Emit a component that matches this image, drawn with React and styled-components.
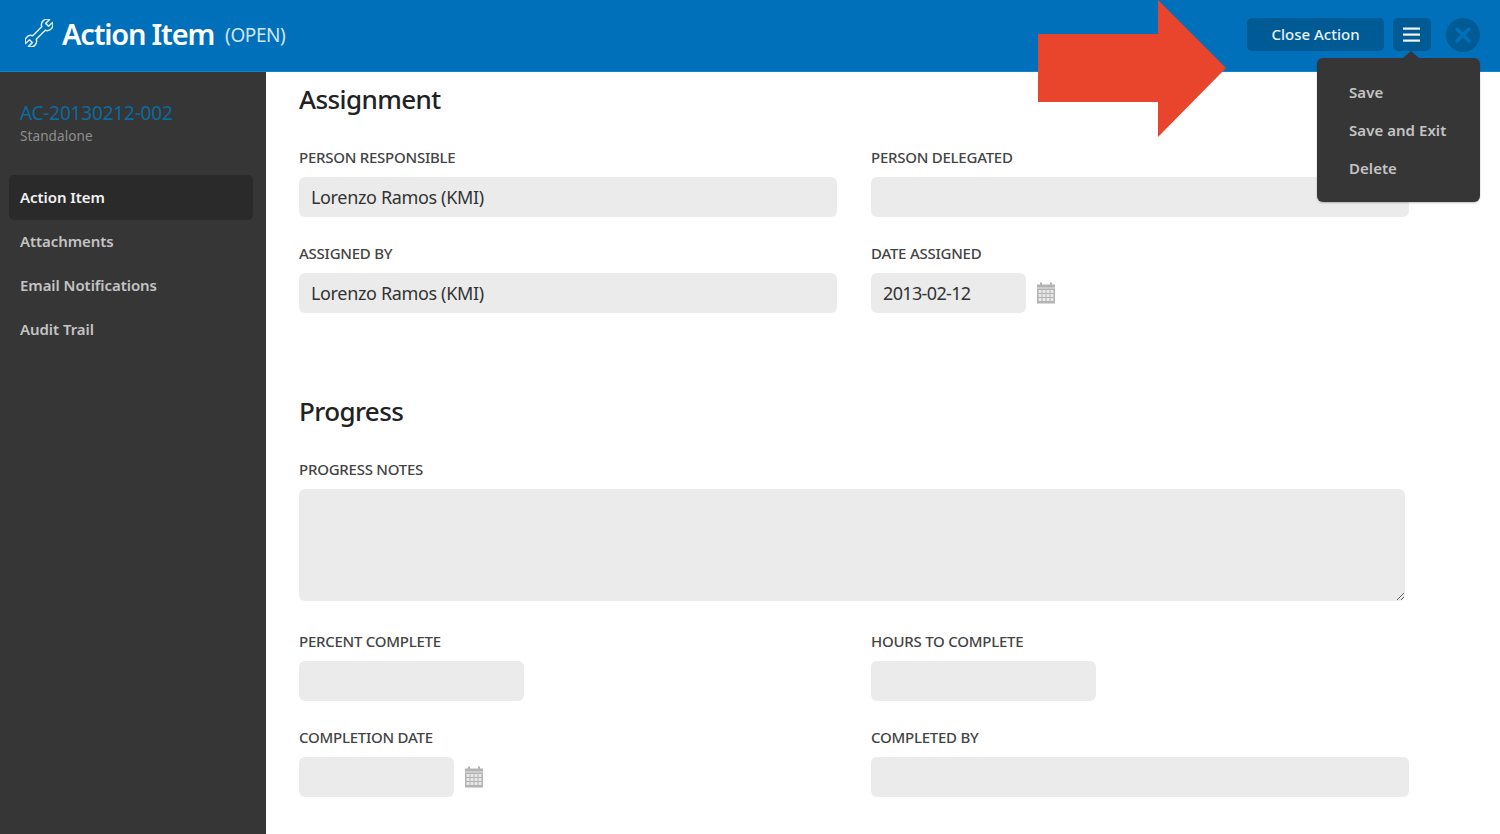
import React from 'react';
import styled, { createGlobalStyle } from 'styled-components';

const Global = createGlobalStyle`
    html, body {
        margin: 0;
        height: 100%;
        overflow: hidden;
        background: #fff;
    }
    body {
        font-family: "Noto Sans", Lato, "Liberation Sans", sans-serif;
    }
`;

const Page = styled.div`
    position: relative;
    width: 1500px;
    height: 834px;
    overflow: hidden;
    display: flex;
    flex-direction: column;
`;

const TopBar = styled.header`
    flex: 0 0 72px;
    box-sizing: border-box;
    background: #0070bb;
    border-bottom: 1px solid #0a86d0;
    display: flex;
    align-items: center;
    padding: 0 20px 2px 24px;
`;

const Title = styled.h1`
    margin: -2px 0 0 8px;
    font-size: 29px;
    line-height: 36px;
    font-weight: 600;
    color: #fff;
    letter-spacing: -1.2px;
`;

const Status = styled.span`
    margin-left: 11px;
    font-size: 19px;
    letter-spacing: -0.4px;
    color: #cfe6f5;
    flex: 1;
`;

const BarButton = styled.button`
    box-sizing: border-box;
    height: 33px;
    padding: 0 ${p => (p.$icon ? '9px' : '20px')} ${p => (p.$icon ? '0' : '1px')};
    width: ${p => (p.$icon ? '38px' : '137px')};
    margin-right: ${p => (p.$icon ? '15px' : '9px')};
    border: 0;
    border-radius: 5px;
    background: #005a94;
    color: #e8f2f9;
    font-family: inherit;
    font-size: 15px;
    font-weight: 500;
    display: flex;
    align-items: center;
    justify-content: center;
    white-space: nowrap;
`;

const CloseCircle = styled.button`
    width: 34px;
    height: 34px;
    padding: 0;
    border: 0;
    border-radius: 50%;
    background: #005a94;
    display: flex;
    align-items: center;
    justify-content: center;
`;

const Arrow = styled.svg`
    position: absolute;
    left: 1038px;
    top: 0;
`;

const Menu = styled.nav`
    position: absolute;
    left: 1317px;
    top: 58px;
    width: 163px;
    height: 144px;
    box-sizing: border-box;
    padding: 15px 0 0 32px;
    background: #363636;
    border-radius: 6px;
    box-shadow: 0 1px 2px rgba(0, 0, 0, 0.25);
    &::before {
        content: '';
        position: absolute;
        left: 86px;
        top: -7px;
        border-left: 8px solid transparent;
        border-right: 8px solid transparent;
        border-bottom: 7px solid #363636;
    }
`;

const MenuItem = styled.div`
    height: 38.2px;
    line-height: 38px;
    font-size: 15px;
    letter-spacing: 0.05px;
    font-weight: 600;
    color: #c4c4c4;
`;

const Body = styled.div`
    flex: 1;
    display: flex;
    min-height: 0;
`;

const Sidebar = styled.aside`
    flex: 0 0 266px;
    box-sizing: border-box;
    background: #363636;
    padding: 29px 13px 0 9px;
`;

const RecordId = styled.div`
    margin-left: 11px;
    font-size: 19px;
    letter-spacing: -0.2px;
    line-height: 24px;
    color: #0a6b9f;
`;

const RecordType = styled.div`
    margin: 0 0 28px 11px;
    font-size: 13.5px;
    line-height: 22px;
    letter-spacing: 0.1px;
    color: #8f8f8f;
`;

const NavItem = styled.div`
    height: ${p => (p.$active ? '45px' : '44px')};
    margin-bottom: ${p => (p.$active ? '-1px' : '0')};
    padding-left: 11px;
    border-radius: 5px;
    line-height: 44px;
    font-size: 15px;
    letter-spacing: -0.06px;
    font-weight: 600;
    color: ${p => (p.$active ? '#f2f2f2' : '#c4c4c4')};
    background: ${p => (p.$active ? '#2a2a2a' : 'transparent')};
`;

const Main = styled.main`
    flex: 1;
    box-sizing: border-box;
    padding: 10px 0 0 33px;
`;

const Heading = styled.h2`
    margin: ${p => p.$before || 0}px 0 33px;
    font-size: 26px;
    line-height: 34px;
    font-weight: 500;
    letter-spacing: -0.6px;
    color: #222;
`;

const Grid = styled.div`
    display: grid;
    grid-template-columns: 538px 538px;
    column-gap: 34px;
    row-gap: 28px;
`;

const Field = styled.div`
    display: flex;
    flex-direction: column;
    align-items: flex-start;
`;

const Label = styled.label`
    height: 19px;
    margin: -1px 0 10px;
    font-size: 15px;
    line-height: 19px;
    font-weight: 500;
    letter-spacing: -0.25px;
    color: #444;
    white-space: nowrap;
`;

const Row = styled.div`
    display: flex;
    align-items: center;
    width: 100%;
`;

const Input = styled.div`
    box-sizing: border-box;
    width: ${p => p.$w || 538}px;
    height: 40px;
    padding-left: 12px;
    border-radius: 6px;
    background: #ebebeb;
    font-size: 18px;
    letter-spacing: ${p => (p.$date ? '-0.65px' : '-0.35px')};
    line-height: 41px;
    color: #333;
`;

const Notes = styled.textarea`
    display: block;
    box-sizing: border-box;
    width: 1106px;
    height: 112px;
    margin-bottom: 32px;
    padding: 10px 12px;
    border: 0;
    border-radius: 6px;
    background: #ebebeb;
    outline: none;
    resize: vertical;
`;

const WrenchSvg = styled.svg`
    margin: -3px 1px 0;
    flex: none;
`;

const WrenchIcon = () => (
    <WrenchSvg width="28" height="28" viewBox="-17 -17 34 34" fill="none" stroke="#dceefa" strokeWidth="1.800" strokeLinejoin="round">
        <path
            transform="rotate(45)"
            d="M2.500 -14L2.500 -20.500A7 7 0 0 1 3 -7.700L3 7.700A7 7 0 0 1 2.500 20.500L2.500 14L-2.500 14L-2.500 20.500A7 7 0 0 1 -3 7.700L-3 -7.700A7 7 0 0 1 -2.500 -20.500L-2.500 -14Z"
        />
    </WrenchSvg>
);

const MenuIcon = () => (
    <svg width="20" height="18" viewBox="0 0 20 18" fill="#f2f8fc">
        <rect x="1" y="1.500" width="17" height="2.200" />
        <rect x="1" y="7.500" width="17" height="2.200" />
        <rect x="1" y="13.500" width="17" height="2.200" />
    </svg>
);

const CloseIcon = () => (
    <svg width="18" height="18" viewBox="0 0 18 18" stroke="#0070bb" strokeWidth="3.400" strokeLinecap="round">
        <path d="M3 3l12 12M15 3L3 15" />
    </svg>
);

const CalendarWrap = styled.svg`
    margin-left: 11px;
    flex: none;
`;

const CalendarIcon = () => (
    <CalendarWrap width="18" height="22" viewBox="0 0 18 22">
        <rect x="0" y="2.500" width="18" height="19" fill="#b3b3b3" />
        <rect x="3" y="0.500" width="2" height="3" fill="#b3b3b3" />
        <rect x="13" y="0.500" width="2" height="3" fill="#b3b3b3" />
        <rect x="0" y="5.500" width="18" height="1" fill="#e4e4e4" />
        {[8, 12, 16].map(y =>
            [1.500, 5.500, 9.500, 13.500].map(x => (
                <rect key={`${x}-${y}`} x={x} y={y} width="3" height="3" fill="#e8e8e8" />
            ))
        )}
    </CalendarWrap>
);

const App = () => {
    return (
        <Page>
            <Global />
            <TopBar>
                <WrenchIcon />
                <Title>Action Item</Title>
                <Status>(OPEN)</Status>
                <BarButton>Close Action</BarButton>
                <BarButton $icon><MenuIcon /></BarButton>
                <CloseCircle><CloseIcon /></CloseCircle>
            </TopBar>
            <Body>
                <Sidebar>
                    <RecordId>AC-20130212-002</RecordId>
                    <RecordType>Standalone</RecordType>
                    <NavItem $active>Action Item</NavItem>
                    <NavItem>Attachments</NavItem>
                    <NavItem>Email Notifications</NavItem>
                    <NavItem>Audit Trail</NavItem>
                </Sidebar>
                <Main>
                    <Heading>Assignment</Heading>
                    <Grid>
                        <Field>
                            <Label>PERSON RESPONSIBLE</Label>
                            <Input>Lorenzo Ramos (KMI)</Input>
                        </Field>
                        <Field>
                            <Label>PERSON DELEGATED</Label>
                            <Input />
                        </Field>
                        <Field>
                            <Label>ASSIGNED BY</Label>
                            <Input>Lorenzo Ramos (KMI)</Input>
                        </Field>
                        <Field>
                            <Label>DATE ASSIGNED</Label>
                            <Row>
                                <Input $w={155} $date>2013-02-12</Input>
                                <CalendarIcon />
                            </Row>
                        </Field>
                    </Grid>
                    <Heading $before={81}>Progress</Heading>
                    <Field>
                        <Label>PROGRESS NOTES</Label>
                        <Notes />
                    </Field>
                    <Grid>
                        <Field>
                            <Label>PERCENT COMPLETE</Label>
                            <Input $w={225} />
                        </Field>
                        <Field>
                            <Label>HOURS TO COMPLETE</Label>
                            <Input $w={225} />
                        </Field>
                        <Field>
                            <Label>COMPLETION DATE</Label>
                            <Row>
                                <Input $w={155} />
                                <CalendarIcon />
                            </Row>
                        </Field>
                        <Field>
                            <Label>COMPLETED BY</Label>
                            <Input />
                        </Field>
                    </Grid>
                </Main>
            </Body>
            <Arrow width="190" height="138" viewBox="0 0 190 138">
                <polygon points="0,34 120,34 120,0 188,68 120,137 120,102 0,102" fill="#e9452c" />
            </Arrow>
            <Menu>
                <MenuItem>Save</MenuItem>
                <MenuItem>Save and Exit</MenuItem>
                <MenuItem>Delete</MenuItem>
            </Menu>
        </Page>
    );
};

export default App;
